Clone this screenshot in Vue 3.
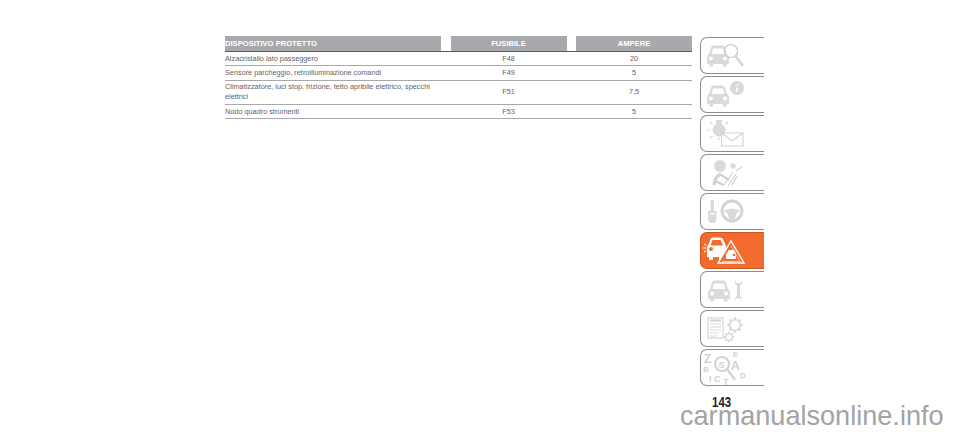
<script setup>
const rows = [
  { name: 'Alzacristallo lato passeggero', fuse: 'F48', amp: '20' },
  { name: 'Sensore parcheggio, retroilluminazione comandi', fuse: 'F49', amp: '5' },
  { name: 'Climatizzatore, luci stop, frizione, tetto apribile elettrico, specchi elettrici', fuse: 'F51', amp: '7,5' },
  { name: 'Nodo quadro strumenti', fuse: 'F53', amp: '5' },
]
const tabs = ['search', 'info', 'mail', 'airbag', 'wheel', 'warning', 'service', 'gears', 'index']
const car = 'M3 9 L5 2.5 Q5.7 0.5 8 0.5 H16 Q18.3 0.5 19 2.5 L21 9 Q23 10 23 12.5 V19 H20.5 V21.5 H17 V19 H7 V21.5 H3.5 V19 H1 V12.5 Q1 10 3 9 Z'

function gear(cx, cy, inner, outer, teeth) {
  const pts = []
  const step = (Math.PI * 2) / teeth
  for (let i = 0; i < teeth; i++) {
    const a = i * step
    const list = [[a - step * 0.3, inner], [a - step * 0.18, outer], [a + step * 0.18, outer], [a + step * 0.3, inner]]
    for (const [ang, r] of list) {
      pts.push(`${(cx + Math.cos(ang) * r).toFixed(2)} ${(cy + Math.sin(ang) * r).toFixed(2)}`)
    }
  }
  return 'M' + pts.join(' L') + ' Z'
}
const bigGear = gear(35, 15, 6, 7.8, 8)
const smallGear = gear(29, 27, 4, 5.4, 8)
</script>

<template>
  <div class="page">
    <section class="table">
      <div class="grid head">
        <div class="hcell left">DISPOSITIVO PROTETTO</div>
        <div class="hcell">FUSIBILE</div>
        <div class="hcell">AMPERE</div>
      </div>
      <div v-for="r in rows" :key="r.fuse" class="grid row">
        <div class="name">{{ r.name }}</div>
        <div class="val">{{ r.fuse }}</div>
        <div class="val">{{ r.amp }}</div>
      </div>
    </section>

    <aside class="side">
      <div class="tabs">
        <div v-for="t in tabs" :key="t" class="tab" :class="{ active: t === 'warning' }">
          <svg viewBox="0 0 64 37" width="64" height="37">
            <g v-if="t === 'search'">
              <g transform="translate(6 8)">
                <path :d="car" class="f" />
                <path d="M5.5 9 L7 3.5 H17 L18.5 9 Z" class="cut" />
                <circle cx="5" cy="13.5" r="2" class="cut" /><circle cx="19" cy="13.5" r="2" class="cut" />
              </g>
              <circle cx="31" cy="14" r="6.5" class="cutS" />
              <path d="M35.5 19 L43 29" class="s thick" />
            </g>
            <g v-else-if="t === 'info'">
              <g transform="translate(6 9)">
                <path :d="car" class="f" />
                <path d="M5.5 9 L7 3.5 H17 L18.5 9 Z" class="cut" />
                <circle cx="5" cy="13.5" r="2" class="cut" /><circle cx="19" cy="13.5" r="2" class="cut" />
              </g>
              <circle cx="37" cy="12" r="7.5" class="f ring" />
              <path d="M37.6 8 v1.6 M37.4 11.5 L36.3 16" class="w" />
            </g>
            <g v-else-if="t === 'mail'">
              <circle cx="19" cy="15" r="6.5" class="f" />
              <rect x="16" y="5" width="6" height="4" class="f" />
              <path d="M7 15 H10.5 M10 7 L12.5 9 M28 7 L25.5 9 M10 23 L12.5 21 M19 25 V23" class="s" />
              <path d="M21.5 18 H43 V31 H21.5 Z M21.5 18 L32 26 L43 18" class="line" />
            </g>
            <g v-else-if="t === 'airbag'">
              <circle cx="20" cy="12" r="6" class="f" />
              <circle cx="33" cy="12" r="2.8" class="f" />
              <path d="M14 31 Q15 22 21 20" class="s body" />
              <path d="M21 21 L29 26 M15 27 L24 31" class="s body2" />
              <path d="M24 31 L33 18 M28 32 L36 20 M32 31 L37 22 M36 17 L42 13" class="s" />
            </g>
            <g v-else-if="t === 'wheel'">
              <rect x="10.5" y="7" width="3.5" height="12" rx="1" class="f" />
              <path d="M8 18 H16.5 V27 L14.5 30 H10 L8 27 Z" class="f" />
              <path d="M10 21 H14.5" class="w" />
              <circle cx="32" cy="18" r="10" class="ringS wide" />
              <path d="M23 18 Q32 13 41 18 L37 20 L34.5 27 H29.5 L27 20 Z" class="f" />
            </g>
            <g v-else-if="t === 'warning'">
              <g transform="translate(5 5)">
                <path d="M3 9 L5.5 2 Q6 0.5 8 0.5 H15 Q17 0.5 18 2 L21 9 V20 H18 V23 H14 V20 H8 V23 H4 V20 H2 V9 Z" fill="#fff" />
                <path d="M5.5 8.5 L7.5 3 H15.5 L18 8.5 Z" fill="#f26a2e" />
                <circle cx="6" cy="12" r="2" fill="#f26a2e" />
                <path d="M-1 7 L1.5 8.5 M-2 11 H1 M-1 15 L1.5 13.5" stroke="#fff" stroke-width="1" />
              </g>
              <path d="M31 9 L44 31 H18 Z" fill="#f26a2e" stroke="#fff" stroke-width="1.4" />
              <path d="M31 14 L40 29.5 H22" fill="none" stroke="#fff" stroke-width=".6" />
              <path d="M27 21 L28.5 18 H34 L36 21 V27 H26 V21 Z" fill="#fff" />
              <circle cx="34" cy="23" r="1.3" fill="#f26a2e" />
            </g>
            <g v-else-if="t === 'service'">
              <g transform="translate(7 9)">
                <path :d="car" class="f" />
                <path d="M5.5 9 L7 3.5 H17 L18.5 9 Z" class="cut" />
                <circle cx="5" cy="13.5" r="2" class="cut" /><circle cx="19" cy="13.5" r="2" class="cut" />
              </g>
              <path d="M36 9 Q34 12 36 14 H37 V25 Q34 27 36 30 V27.5 H41 V30 Q43 27 40 25 V14 H41 Q43 12 41 9 V12 H36 Z" class="f" />
            </g>
            <g v-else-if="t === 'gears'">
              <rect x="8" y="8" width="15" height="20" class="line" />
              <path d="M10 10.5 H21" class="s bar" />
              <path d="M10 14 H21 M10 17 H21 M10 20 H21 M10 23 H19 M10 26 H17" class="s thin" />
              <path :d="bigGear" class="f" /><circle cx="35" cy="15" r="4.4" class="cut" />
              <path :d="smallGear" class="f" /><circle cx="29" cy="27" r="2.6" class="cut" />
            </g>
            <g v-else>
              <text x="4" y="14" class="ltr big">Z</text>
              <text x="33" y="8" class="ltr sm">E</text>
              <text x="3" y="23" class="ltr sm">B</text>
              <text x="31" y="21" class="ltr big">A</text>
              <text x="40" y="29" class="ltr sm">D</text>
              <text x="9" y="33" class="ltr md">I</text>
              <text x="14" y="33" class="ltr md">C</text>
              <text x="23" y="36" class="ltr md">T</text>
              <text x="18.5" y="18.5" class="ltr md">S</text>
              <circle cx="22" cy="15" r="7" class="ringS" />
              <path d="M27 20 L35 31" class="s thick" />
            </g>
          </svg>
        </div>
      </div>
      <div class="pageno">143</div>
    </aside>

    <div class="mark">carmanualsonline.info</div>
  </div>
</template>

<style scoped>
.page { position: relative; width: 960px; height: 432px; overflow: hidden; background: #fff; display: flex; align-items: flex-start; padding: 36px 0 0 225px; box-sizing: border-box; font-family: "Liberation Sans", Arial, sans-serif; }
.table { width: 467px; }
.grid { display: grid; grid-template-columns: 216px 116px 116px; column-gap: 9.5px; }
.head { border-bottom: 1.5px solid #58595b; }
.hcell { background: #a7a9ac; color: #fff; font-size: 7.6px; font-weight: 700; height: 14.5px; line-height: 16px; text-align: center; }
.hcell.left { text-align: left; }
.row { border-bottom: 1px solid #a7a9ac; color: #636466; font-size: 7.3px; line-height: 10px; padding: 2px 0 1.5px; align-items: center; }
.row:nth-child(4) { padding: 1.5px 0; }
.val { text-align: center; }
.side { margin-left: 8px; width: 64px; }
.tabs { display: flex; flex-direction: column; padding-top: 1px; }
.tab { height: 37px; margin-bottom: 2px; box-sizing: border-box; border: 1px solid #8a8c8e; border-right: none; border-bottom-width: 1.5px; border-radius: 7px 0 0 7px; position: relative; }
.tab svg { position: absolute; left: -1px; top: -1px; display: block; }
.tab.active { background: #f26a2e; border-color: #c9541f; }
.f { fill: #d9dadb; }
.cut { fill: #fff; }
.cutS { fill: rgba(255,255,255,.55); stroke: #c4c5c7; stroke-width: 1.2; }
.s { stroke: #d1d2d4; stroke-width: 1.2; fill: none; }
.s.thick { stroke-width: 2.4; }
.s.thin { stroke-width: .9; }
.s.bar { stroke-width: 2; }
.s.body { stroke-width: 3.2; }
.s.body2 { stroke-width: 2.2; }
.w { stroke: #fff; stroke-width: 1.5; fill: none; }
.ring { stroke: #fff; stroke-width: 1; }
.ringS { fill: none; stroke: #d1d2d4; stroke-width: 2; }
.ringS.wide { stroke-width: 2.8; }
.line { fill: #fff; stroke: #d1d2d4; stroke-width: 1.1; }
.ltr { fill: #d1d2d4; font-weight: 700; font-family: "Liberation Sans", Arial, sans-serif; }
.big { font-size: 12px; }
.md { font-size: 9px; }
.sm { font-size: 8px; }
.pageno { width: 24px; margin: 8px 0 0 12px; font-size: 14px; font-weight: 700; line-height: 12px; color: #231f20; transform: scaleX(.82); transform-origin: left center; }
.mark { position: absolute; left: 680px; top: 408px; font-size: 27.1px; line-height: 16px; color: #a3a3a3; white-space: nowrap; }
</style>
